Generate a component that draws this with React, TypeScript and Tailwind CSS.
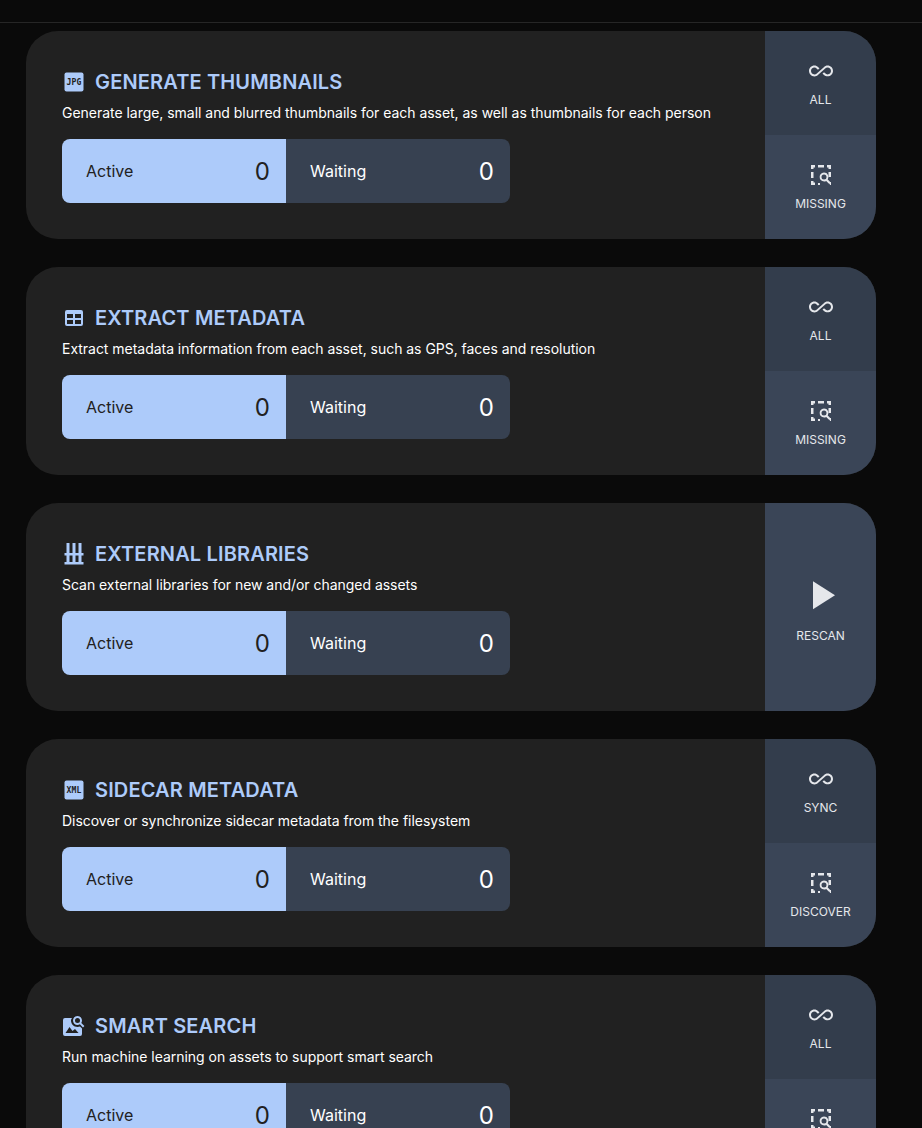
import type { ReactNode } from "react";

const Badge = ({ label }: { label: string }) => (
  <svg width="24" height="24" viewBox="0 0 24 24">
    <rect x="2.5" y="2.5" width="19" height="19" rx="2" fill="#adcbfa" />
    <text x="12" y="14.9" textAnchor="middle" fontSize="8.5" fontWeight="700" textLength="15" lengthAdjust="spacingAndGlyphs" fontFamily="'DejaVu Sans Mono', monospace" fill="#212121">
      {label}
    </text>
  </svg>
);

const TableIcon = () => (
  <svg width="24" height="24" viewBox="0 0 24 24" fill="#adcbfa">
    <path d="M5,4H19A2,2 0 0,1 21,6V18A2,2 0 0,1 19,20H5A2,2 0 0,1 3,18V6A2,2 0 0,1 5,4M5,8V12H11V8H5M13,8V12H19V8H13M5,14V18H11V14H5M13,14V18H19V14H13Z" />
  </svg>
);

const ShelvesIcon = () => (
  <svg width="24" height="24" viewBox="0 0 24 24" fill="#adcbfa">
    <path d="M2.5 20H21.5V22.5H2.5ZM2.5 11H21.5V13.5H2.5ZM4.5 1H7.5V11H4.5ZM10.5 1H13.5V11H10.5ZM16.5 1H19.5V11H16.5ZM4.5 13H7.5V20H4.5ZM10.5 13H13.5V20H10.5ZM16.5 13H19.5V20H16.5Z" />
  </svg>
);

const ImageSearchIcon = () => (
  <svg width="24" height="24" viewBox="0 0 24 24" fill="#adcbfa">
    <path d="M15.5,2C18,2 20,4 20,6.5C20,7.38 19.75,8.2 19.31,8.89L22.39,12L21,13.39L17.88,10.32C17.19,10.75 16.37,11 15.5,11C13,11 11,9 11,6.5C11,4 13,2 15.5,2M15.5,4A2.5,2.5 0 0,0 13,6.5A2.5,2.5 0 0,0 15.5,9A2.5,2.5 0 0,0 18,6.5A2.5,2.5 0 0,0 15.5,4Z" />
    <path fillRule="evenodd" d="M3,4H10C9.3,5 9,5.7 9,6.5C9,10.1 11.9,13 15.5,13C16.4,13 17.2,12.8 18,12.5L20,14.5V20A2,2 0 0,1 18,22H3A2,2 0 0,1 1,20V6A2,2 0 0,1 3,4ZM7.5,13L3.5,19H16.5L13,15L10.5,17Z" />
  </svg>
);

const AllIcon = () => (
  <svg width="24" height="24" viewBox="0 0 24 24" fill="currentColor">
    <path d="M18.6,6.62C17.16,6.62 15.8,7.18 14.83,8.15L7.8,14.39C7.16,15.03 6.31,15.38 5.4,15.38C3.53,15.38 2,13.87 2,12C2,10.13 3.53,8.62 5.4,8.62C6.31,8.62 7.16,8.97 7.84,9.65L8.97,10.65L10.5,9.31L9.22,8.2C8.2,7.18 6.84,6.62 5.4,6.62C2.42,6.62 0,9.04 0,12C0,14.96 2.42,17.38 5.4,17.38C6.84,17.38 8.2,16.82 9.17,15.85L16.2,9.61C16.84,8.97 17.69,8.62 18.6,8.62C20.47,8.62 22,10.13 22,12C22,13.87 20.47,15.38 18.6,15.38C17.7,15.38 16.84,15.03 16.16,14.35L15,13.34L13.5,14.68L14.78,15.8C15.8,16.81 17.15,17.37 18.6,17.37C21.58,17.37 24,14.96 24,12C24,9.03 21.58,6.62 18.6,6.62Z" />
  </svg>
);

const MissingIcon = () => (
  <svg width="24" height="24" viewBox="0 0 24 24" fill="currentColor">
    <path d="M2 2H6V4.5H4.5V6H2ZM9 2H15V4.5H9ZM18 2H22V6H19.5V4.5H18ZM2 9H4.5V15H2ZM19.5 9H22V14H19.5ZM2 18H4.5V19.5H6V22H2ZM9 20H11V22H9ZM20 19H22V22H21Z" />
    <path fillRule="evenodd" d="M15 9.5A4.5 4.5 0 0 1 18.7 16.6L21.7 19.6L20.2 21L17.2 18A4.5 4.5 0 1 1 15 9.5ZM15 11.5A2.5 2.5 0 1 0 15 16.5A2.5 2.5 0 1 0 15 11.5Z" />
  </svg>
);

const PlayIcon = () => (
  <svg width="48" height="48" viewBox="0 0 24 24" fill="currentColor">
    <path d="M8,5.14V19.14L19,12.14L8,5.14Z" />
  </svg>
);

const ActionButton = ({ icon, label, shade }: { icon: ReactNode; label: string; shade: "dark" | "light" }) => (
  <button
    className={`flex h-full w-full flex-col items-center justify-center gap-[9px] text-xs text-[#e5e7eb] ${
      shade === "dark" ? "bg-[#333d4c]" : "bg-[#3a4557]"
    }`}
  >
    {icon}
    <span className="leading-4">{label}</span>
  </button>
);

type Job = {
  title: string;
  description: string;
  icon: ReactNode;
  actions: { icon: ReactNode; label: string }[];
};

const jobs: Job[] = [
  {
    title: "GENERATE THUMBNAILS",
    description: "Generate large, small and blurred thumbnails for each asset, as well as thumbnails for each person",
    icon: <Badge label="JPG" />,
    actions: [
      { icon: <AllIcon />, label: "ALL" },
      { icon: <MissingIcon />, label: "MISSING" },
    ],
  },
  {
    title: "EXTRACT METADATA",
    description: "Extract metadata information from each asset, such as GPS, faces and resolution",
    icon: <TableIcon />,
    actions: [
      { icon: <AllIcon />, label: "ALL" },
      { icon: <MissingIcon />, label: "MISSING" },
    ],
  },
  {
    title: "EXTERNAL LIBRARIES",
    description: "Scan external libraries for new and/or changed assets",
    icon: <ShelvesIcon />,
    actions: [{ icon: <PlayIcon />, label: "RESCAN" }],
  },
  {
    title: "SIDECAR METADATA",
    description: "Discover or synchronize sidecar metadata from the filesystem",
    icon: <Badge label="XML" />,
    actions: [
      { icon: <AllIcon />, label: "SYNC" },
      { icon: <MissingIcon />, label: "DISCOVER" },
    ],
  },
  {
    title: "SMART SEARCH",
    description: "Run machine learning on assets to support smart search",
    icon: <ImageSearchIcon />,
    actions: [
      { icon: <AllIcon />, label: "ALL" },
      { icon: <MissingIcon />, label: "MISSING" },
    ],
  },
];

const JobCard = ({ job }: { job: Job }) => (
  <div className="flex h-[208px] shrink-0 overflow-hidden rounded-[32px] bg-[#212121]">
    <div className="flex-1 px-9 pt-9">
      <div className="flex h-[30px] items-center gap-[9px] text-xl font-semibold tracking-[0.15px] text-[#adcbfa]">
        {job.icon}
        <span>{job.title}</span>
      </div>
      <p className="mt-[6px] h-5 text-sm leading-5 tracking-[-0.03px] text-white">{job.description}</p>
      <div className="mt-4 flex h-16 w-[448px] overflow-hidden rounded-lg">
        <div className="flex flex-1 items-center justify-between bg-[#adcbfa] pl-6 pr-4 text-[#212121]">
          <span>Active</span>
          <span className="pt-0.5 text-2xl">0</span>
        </div>
        <div className="flex flex-1 items-center justify-between bg-[#374151] pl-6 pr-4 text-white">
          <span>Waiting</span>
          <span className="pt-0.5 text-2xl">0</span>
        </div>
      </div>
    </div>
    <div className="flex w-[111px] flex-col">
      {job.actions.map((action, i) => (
        <ActionButton key={action.label} icon={action.icon} label={action.label} shade={i === 0 && job.actions.length > 1 ? "dark" : "light"} />
      ))}
    </div>
  </div>
);

export default function App() {
  return (
    <div className="flex h-screen flex-col overflow-hidden bg-[#0a0a0a] font-['Inter',sans-serif]">
      <div className="h-[23px] shrink-0 border-b border-[#262626]" />
      <div className="flex flex-col gap-7 pl-[26px] pr-[46px] pt-2">
        {jobs.map((job) => (
          <JobCard key={job.title} job={job} />
        ))}
      </div>
    </div>
  );
}
